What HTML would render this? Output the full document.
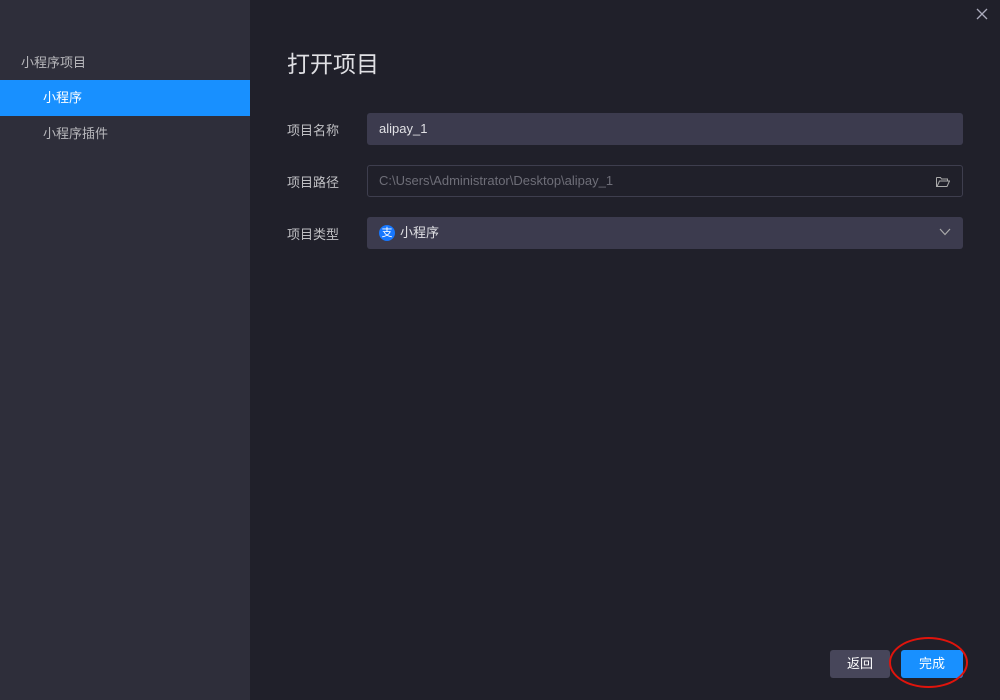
<!DOCTYPE html>
<html><head><meta charset="utf-8"><style>
*{margin:0;padding:0;box-sizing:border-box}
body{width:1000px;height:700px;background:#20202a;font-family:"Liberation Sans","Noto Sans CJK SC",sans-serif;position:relative;overflow:hidden;color:#c8c8cc}
.side{position:absolute;left:0;top:0;width:250px;height:700px;background:#2e2e3a}
.side .h{position:absolute;left:21px;top:52px;font-size:13px;color:#b8b8bc}
.side .a{position:absolute;left:0;top:80px;width:250px;height:36px;background:#1890ff;color:#fff;font-size:13px;line-height:36px;padding-left:43px}
.side .b{position:absolute;left:43px;top:123px;font-size:13px;color:#b8b8bc}
h1{position:absolute;left:287px;top:45px;font-size:23px;font-weight:normal;color:#e0e0e4}
.lbl{position:absolute;left:287px;font-size:13px;color:#c0c0c4}
.f{position:absolute;left:367px;width:596px;height:32px;border-radius:3px;font-size:13px;line-height:32px;padding-left:12px}
.btn{position:absolute;top:650px;height:28px;border-radius:3px;font-size:13px;line-height:28px;text-align:center;color:#fff}
</style></head><body>
<div class="side"><div class="h">小程序项目</div><div class="a">小程序</div><div class="b">小程序插件</div></div>
<svg style="position:absolute;left:976px;top:8px" width="12" height="12"><path d="M1 1L11 11M11 1L1 11" stroke="#aab" stroke-width="1.3"/></svg>
<h1>打开项目</h1>
<div class="lbl" style="top:120px">项目名称</div>
<div class="f" style="top:113px;background:#3c3b4e;color:#e0e0e4">alipay_1</div>
<div class="lbl" style="top:172px">项目路径</div>
<div class="f" style="top:165px;border:1px solid #3e3e4e;color:#6e6e78;padding-left:11px;line-height:30px">C:\Users\Administrator\Desktop\alipay_1
<svg style="position:absolute;right:12px;top:10px" width="14" height="11"><path d="M0.5 1.5h4l1 1.5h6v2M0.5 1.5v9h10.5l2.5-5.5h-10l-2.5 5.5" fill="none" stroke="#aaa" stroke-width="1"/></svg></div>
<div class="lbl" style="top:224px">项目类型</div>
<div class="f" style="top:217px;background:#3c3b4e;color:#e0e0e4;padding-left:33px">小程序
<div style="position:absolute;left:12px;top:8px;width:16px;height:16px;border-radius:50%;background:#1677ff;color:#fff;font-size:11px;line-height:16px;text-align:center">支</div>
<svg style="position:absolute;right:12px;top:11px" width="12" height="8"><path d="M1 1L6 6.5L11 1" fill="none" stroke="#aaa" stroke-width="1.2"/></svg></div>
<div class="btn" style="left:830px;width:60px;background:#47465a">返回</div>
<div class="btn" style="left:901px;width:62px;background:#1890ff">完成</div>
<div style="position:absolute;left:889px;top:637px;width:79px;height:51px;border:2.5px solid #e0140c;border-radius:50%"></div>
</body></html>
